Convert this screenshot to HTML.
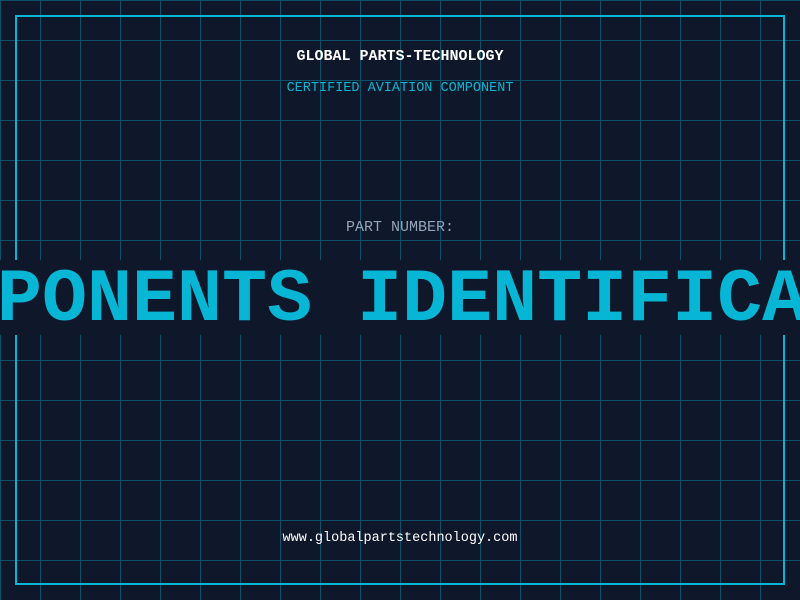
<!DOCTYPE html>
<html><head><style>
body{margin:0;width:800px;height:600px;overflow:hidden;background:#0f172a;position:relative;font-family:"Liberation Mono",monospace;}
.grid{position:absolute;inset:0;background-image:linear-gradient(#0e5068 1px,transparent 1px),linear-gradient(90deg,#0e5068 1px,transparent 1px);background-size:40px 40px;background-position:0 0;}
.frame{position:absolute;left:15px;top:15px;width:766px;height:566px;border:2px solid #06b6d4;}
.t{position:absolute;left:0;width:800px;text-align:center;white-space:nowrap;}
.band{position:absolute;left:0;top:260px;width:800px;height:75px;background:#0f172a;overflow:hidden;}
.big{position:absolute;left:-138px;top:3px;line-height:75px;font-size:75px;font-weight:bold;color:#06b6d4;white-space:nowrap;}
</style></head><body>
<div class="grid"></div>
<div class="frame"></div>
<div class="t" style="top:48px;color:#fff;font-size:15px;font-weight:bold;">GLOBAL PARTS-TECHNOLOGY</div>
<div class="t" style="top:81px;color:#06b6d4;font-size:13.5px;">CERTIFIED AVIATION COMPONENT</div>
<div class="t" style="top:219px;color:#94a3b8;font-size:15px;">PART NUMBER:</div>
<div class="band"><div class="big">COMPONENTS IDENTIFICATION</div></div>
<div class="t" style="top:531px;color:#fff;font-size:13.5px;">www.globalpartstechnology.com</div>
</body></html>
